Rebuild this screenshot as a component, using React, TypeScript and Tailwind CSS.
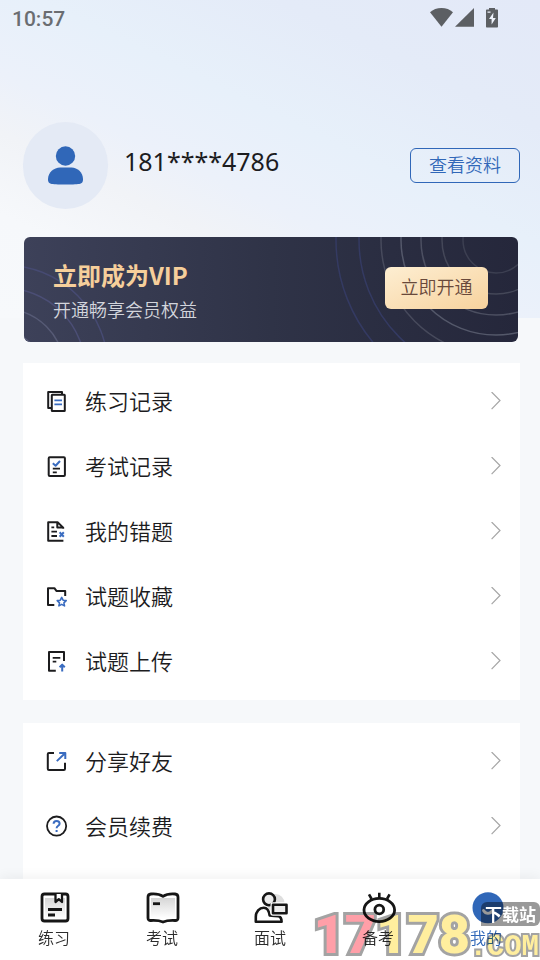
// src/pages/Mine/Mine.tsx
import React, { useState } from "react";
import type { ReactNode } from "react";

type MenuItem = { id: string; label: string; icon: ReactNode };

// 菜单图标外框
const MenuIcon = ({ children }: { children: ReactNode }) => (
    <svg className="size-6 shrink-0" viewBox="0 0 24 24" fill="none" stroke="#1c1c1e" strokeWidth="2" strokeLinejoin="round">
        {children}
    </svg>
);

const recordItems: MenuItem[] = [
    {
        id: "practice",
        label: "练习记录",
        icon: (
            <MenuIcon>
                <path d="M6.5 18H3.2V1.9H17v2.6" />
                <rect x="6.8" y="4.7" width="13" height="16.2" rx="0.5" />
                <path d="M9.4 10.4h7.6M9.4 14.4h7.6" stroke="#3a6cc0" strokeWidth="1.8" />
            </MenuIcon>
        ),
    },
    {
        id: "exam",
        label: "考试记录",
        icon: (
            <MenuIcon>
                <rect x="3.7" y="2.2" width="16.2" height="18.8" rx="1" />
                <path d="M7.8 8.2l2.8 2.5L15 6" stroke="#3a6cc0" />
                <path d="M7.8 13.6h7.2M7.8 17.3h4" strokeWidth="1.8" />
            </MenuIcon>
        ),
    },
    {
        id: "mistakes",
        label: "我的错题",
        icon: (
            <MenuIcon>
                <path d="M18.4 20.8H3.2V2.2h9.4l5.6 5.4v1.2M12.3 2.4v5.2h5.5" />
                <path d="M6.4 7.3h2.8M6.4 11.7H12M6.4 16H12" strokeWidth="1.8" />
                <path d="M14.6 12.3l4.2 4.4M18.8 12.3l-4.2 4.4" stroke="#3a6cc0" />
            </MenuIcon>
        ),
    },
    {
        id: "favorites",
        label: "试题收藏",
        icon: (
            <MenuIcon>
                <path d="M9.3 19.9H3V3.2h6.4l2 2.7h8.8V11" />
                <path d="M16.7 12.4l1.4 2.8 3.1.4-2.3 2.2.6 3.1-2.8-1.5-2.8 1.5.6-3.1-2.3-2.2 3.1-.4z" stroke="#3a6cc0" strokeWidth="1.6" />
            </MenuIcon>
        ),
    },
    {
        id: "upload",
        label: "试题上传",
        icon: (
            <MenuIcon>
                <path d="M10.8 20.8H4V2.1h15V11" />
                <path d="M7.7 7.8h7.6M7.7 11.7h3.6" strokeWidth="1.8" />
                <path d="M17.2 21.5v-6.3M14.6 17.2l2.6-2.6 2.6 2.6" stroke="#3a6cc0" />
            </MenuIcon>
        ),
    },
];

const serviceItems: MenuItem[] = [
    {
        id: "share",
        label: "分享好友",
        icon: (
            <MenuIcon>
                <path d="M9 2.9H4a1.2 1.2 0 00-1.2 1.2v14.7A1.2 1.2 0 004 20h14.8a1.2 1.2 0 001.2-1.2v-6" />
                <path d="M11.8 11.1L20 3.2M14.2 2.9h6.1V9" stroke="#3a6cc0" />
            </MenuIcon>
        ),
    },
    {
        id: "renew",
        label: "会员续费",
        icon: (
            <MenuIcon>
                <circle cx="11.6" cy="11.1" r="9.6" strokeWidth="1.8" />
                <path d="M8.6 8.8a3 2.8 0 116 0c0 2-3 2-3 4.4M11.6 15v2" stroke="#3a6cc0" />
            </MenuIcon>
        ),
    },
];

// 底部导航图标外框
const TabIcon = ({ children }: { children: ReactNode }) => (
    <svg className="size-9" viewBox="0 0 36 36" fill="none" stroke="#161616" strokeWidth="2.8" strokeLinejoin="round">
        <defs>
            <linearGradient id="tabShade" x1="0" y1="0" x2="0" y2="1">
                <stop offset="0" stopColor="#d6d6d6" />
                <stop offset="1" stopColor="#ffffff" />
            </linearGradient>
        </defs>
        {children}
    </svg>
);

const tabs: MenuItem[] = [
    {
        id: "practice",
        label: "练习",
        icon: (
            <TabIcon>
                <rect x="9" y="8" width="20" height="21" fill="url(#tabShade)" stroke="none" />
                <rect x="6" y="4" width="26" height="27" rx="2.5" />
                <path d="M19.5 4v8l3.300-2.800L26 12V4" fill="#ffffff" strokeWidth="2.300" />
                <path d="M12 19.500h14M12 25h7" />
            </TabIcon>
        ),
    },
    {
        id: "exam",
        label: "考试",
        icon: (
            <TabIcon>
                <path d="M7 8h24v20H7z" fill="url(#tabShade)" stroke="none" />
                <path d="M19 6.300c-4-2.600-8-2.600-12-2.300-2 .2-3 1.200-3 3v21c0 1.800 1 2.600 3 2.500 4-.2 8-.2 12 1.500 4-1.700 8-1.700 12-1.500 2 .1 3-.7 3-2.500V7c0-1.800-1-2.800-3-3-4-.3-8-.3-12 2.300z" />
                <path d="M9 13.700h7" />
            </TabIcon>
        ),
    },
    {
        id: "interview",
        label: "面试",
        icon: (
            <TabIcon>
                <circle cx="23.500" cy="13" r="9" fill="#dedede" stroke="none" />
                <path d="M3.800 31.800v-5c0-5 3.500-9 8-9 4.200 0 5.200 3.400 5.800 7.600 3.600.8 5.800.2 9 .8 2 .6 3 3 3 5.600z" fill="#ffffff" strokeWidth="2.600" />
                <circle cx="17" cy="9.300" r="5.900" fill="#ececec" strokeWidth="2.600" />
                <rect x="21" y="14.800" width="13.500" height="8.500" fill="#ececec" stroke="#ffffff" strokeWidth="5" />
                <rect x="21" y="14.800" width="13.500" height="8.500" fill="#ececec" strokeWidth="2.600" />
            </TabIcon>
        ),
    },
    {
        id: "prepare",
        label: "备考",
        icon: (
            <TabIcon>
                <ellipse cx="19.300" cy="20" rx="15.300" ry="11.600" />
                <circle cx="19.300" cy="19.500" r="4.400" />
                <path d="M19.300 2.800v5.400M9 4.400l2.600 4.600M29.600 4.400l-2.600 4.600" strokeWidth="2.600" />
            </TabIcon>
        ),
    },
    {
        id: "mine",
        label: "我的",
        icon: (
            <TabIcon>
                <circle cx="20" cy="17.800" r="15.500" fill="#3067b8" stroke="none" />
                <path d="M15.500 20.500c2.200 3.800 6.800 3.800 9 0" stroke="#ffffff" strokeLinecap="round" />
            </TabIcon>
        ),
    },
];

const StatusBar = () => (
    <div className="flex h-9 items-center justify-between pl-3 pr-10">
        <span className="pt-0.5 font-['Roboto'] text-[21px] font-medium leading-9 text-[#6a6d71]">10:57</span>
        <div className="flex items-center text-[#5c5f63]">
            <svg className="h-5 w-6" viewBox="0 0 24 20" fill="currentColor">
                <path d="M12.500 18.700L1 4.200C4 1.500 8 0 12.500 0S21 1.500 24 4.200z" />
            </svg>
            <svg className="ml-px h-5 w-5" viewBox="0 0 20 20" fill="currentColor">
                <path d="M20 0v18.700H1z" />
            </svg>
            <svg className="ml-2.5 h-5 w-4" viewBox="0 0 16 20" fill="currentColor">
                <path d="M5 0h6v1.500h2c.6 0 1 .4 1 1v16c0 .6-.4 1-1 1H3c-.6 0-1-.4-1-1v-16c0-.6.400-1 1-1h2z" />
                <path d="M3.500 3.500h3v1.200h-3zM9.500 4.500L5 11h2.600v5.500L11.800 10H9z" fill="#eef2fb" />
            </svg>
        </div>
    </div>
);

const Profile = () => (
    <section className="mt-[86px] flex items-center">
        <div className="flex h-[87px] w-[85px] items-center justify-center rounded-full bg-[#e4eaf5]">
            <svg className="h-10 w-9" viewBox="0 0 36 40" fill="#3067b8">
                <circle cx="17.500" cy="10" r="9.700" />
                <path d="M12 21.500h11.500c6 0 11.500 5 11.500 11.500 0 5-1.500 5.500-17.500 5.500S0 38 0 33c0-6.500 6-11.500 12-11.500z" />
            </svg>
        </div>
        <p className="-mt-2.5 ml-4 flex-1 font-['Noto_Sans'] text-[25px] leading-9 text-[#1c1c1e]">181****4786</p>
        <button className="h-[35px] w-[110px] rounded-md border border-[#3067b8] pb-1 text-lg font-[350] leading-7 text-[#3067b8]">
            查看资料
        </button>
    </section>
);

const VipBanner = () => (
    <section className="relative mr-0.5 ml-px mt-7 flex h-[105px] items-center justify-between overflow-hidden rounded-md bg-linear-to-r from-[#3d4159] via-[#2f3347] to-[#25273b] pl-[29px] pr-[30px]">
        {/* 背景圆弧 */}
        <svg className="absolute bottom-0 left-0 h-[105px] w-28" viewBox="0 0 112 105" fill="none" strokeWidth="1.500">
            <circle cx="-20" cy="132" r="104" stroke="#464a72" />
            <circle cx="-20" cy="132" r="81" stroke="#4b4e75" />
            <circle cx="-20" cy="132" r="60" stroke="#565a75" />
            <circle cx="-20" cy="132" r="37" stroke="#565a75" />
        </svg>
        <svg className="absolute right-0 top-0 h-[105px] w-[184px]" viewBox="0 0 184 105" fill="none" strokeWidth="1.500">
            <circle cx="162" cy="3" r="160" stroke="#343a62" />
            <circle cx="162" cy="3" r="137" stroke="#343a62" />
            <circle cx="162" cy="3" r="115" stroke="#474a5c" />
            <circle cx="162" cy="3" r="95" stroke="#54586a" />
            <circle cx="162" cy="3" r="75" stroke="#4c4f61" />
            <circle cx="162" cy="3" r="54" stroke="#444758" />
            <circle cx="162" cy="3" r="33" stroke="#3c3f51" />
        </svg>
        <div className="relative pt-0.5">
            <h2 className="text-2xl font-bold leading-9 text-[#f6cf9b]">立即成为VIP</h2>
            <p className="text-lg font-[350] leading-8 text-[#d3d5dc]">开通畅享会员权益</p>
        </div>
        <button className="relative mb-1 h-[42px] w-[103px] rounded-md bg-linear-to-br from-[#fdeed2] to-[#f7d29d] pb-1 text-lg font-[350] leading-7 text-[#69493b]">
            立即开通
        </button>
    </section>
);

const MenuCard = ({ items }: { items: MenuItem[] }) => (
    <ul className="bg-white py-1.5 last:flex-1">
        {items.map((item) => (
            <li key={item.id}>
                <button className="flex h-[65px] w-full items-center pl-[22px] pr-[19px] text-left">
                    {item.icon}
                    <span className="ml-4 flex-1 pb-1 text-[22px] font-[350] leading-8 text-[#1c1c1e]">{item.label}</span>
                    <svg className="h-5 w-2.5" viewBox="0 0 10 20" fill="none" stroke="#a6a6a6" strokeWidth="1.200">
                        <path d="M.6 0l8.400 8.500L.6 17.200" />
                    </svg>
                </button>
            </li>
        ))}
    </ul>
);

// 下载站水印
const Watermark = () => (
    <>
        <div className="pointer-events-none absolute bottom-0 right-[70px] flex font-['Roboto',sans-serif] text-[54px] font-black leading-[50px] mix-blend-multiply [paint-order:stroke_fill] [-webkit-text-stroke:6px_#a3a3a3]">
            <span className="text-[#ff9fa8]">17</span>
            <span className="text-[#ffee9e]">178</span>
        </div>
        <span className="pointer-events-none absolute bottom-0 right-px font-['Liberation_Mono',monospace] text-[29px] font-bold leading-6 text-[#ffee9e] mix-blend-multiply [paint-order:stroke_fill] [-webkit-text-stroke:4px_#a3a3a3]">
            .COM
        </span>
        <span className="pointer-events-none absolute right-0 top-[23px] h-6 rounded-md rounded-bl-none bg-black/40 px-1 text-[17px] font-bold leading-6 text-white">
            下载站
        </span>
    </>
);

const TabBar = () => {
    const [activeTab, setActiveTab] = useState("mine");

    return (
        <nav className="relative z-10 flex shrink-0 bg-white pb-2.5 pt-[11px] shadow-[0_-2px_12px_rgba(0,0,0,0.06)]">
            {tabs.map((tab) => (
                <button key={tab.id} onClick={() => setActiveTab(tab.id)} className="flex flex-1 flex-col items-center">
                    {tab.icon}
                    <span className={`pb-0.5 text-base font-[350] leading-[22px] ${activeTab === tab.id ? "text-[#3067b8]" : "text-[#2c2c2c]"}`}>
                        {tab.label}
                    </span>
                </button>
            ))}
            <Watermark />
        </nav>
    );
};

export const Mine = () => {
    return (
        <div className="flex h-screen flex-col overflow-hidden bg-[#f6f8fa] font-['Noto_Sans_CJK_SC',sans-serif]">
            <main className="flex min-h-0 flex-1 flex-col overflow-y-auto bg-[linear-gradient(206deg,#e3e9f8_0%,#e4ebf8_22%,#e7f0fa_42%,#ecf1fa_58%,#f1f3f7_68%,#f6f8fb_82%,#f7f9fb_100%)] bg-[length:100%_318px] bg-no-repeat [scrollbar-width:none]">
                <StatusBar />
                <div className="flex flex-1 flex-col pl-[23px] pr-5">
                    <Profile />
                    <VipBanner />
                    <div className="mt-[21px] flex flex-1 flex-col gap-[23px]">
                        <MenuCard items={recordItems} />
                        <MenuCard items={serviceItems} />
                    </div>
                </div>
            </main>
            <TabBar />
        </div>
    );
};

export default Mine;
